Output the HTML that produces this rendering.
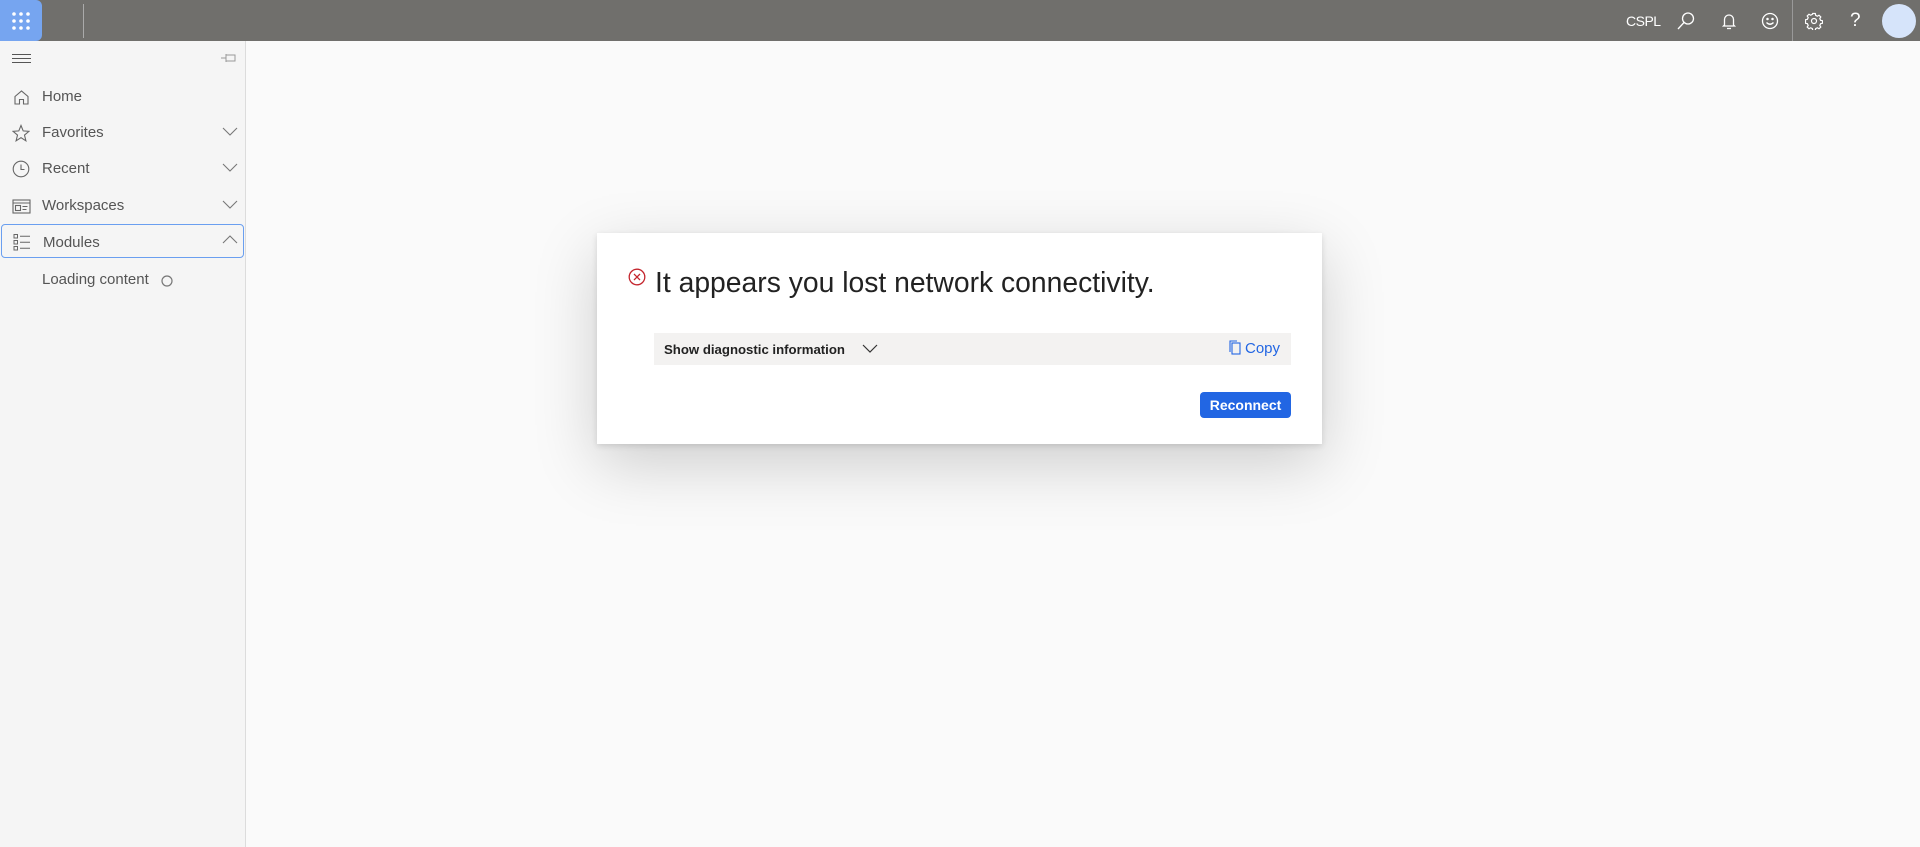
<!DOCTYPE html>
<html><head><meta charset="utf-8"><style>
*{box-sizing:border-box;margin:0;padding:0}
body{width:1920px;height:847px;overflow:hidden;background:#fafafa;font-family:"Liberation Sans",sans-serif;position:relative}
.hdr{position:absolute;left:0;top:0;width:1920px;height:41px;background:#706f6c}
.app{position:absolute;left:0;top:0;width:42px;height:41px;background:#76a5f0;border-radius:0 6px 6px 0}
.side{position:absolute;left:0;top:41px;width:246px;height:806px;background:#f5f5f5;border-right:1px solid #dcdcdc}
.item{position:absolute;left:0;width:244px;height:34px;font-size:15px;color:#555;line-height:36px}
.item span{position:absolute;left:42px}
.item svg{position:absolute}
.chev{right:6px;top:10px}
.dlg{position:absolute;left:597px;top:233px;width:725px;height:211px;background:#fff;box-shadow:0 20px 60px rgba(0,0,0,.18),0 2px 6px rgba(0,0,0,.12)}
</style></head><body>
<div class="hdr">
 <div class="app"><svg width="42" height="41"><g fill="#fff"><circle cx="14" cy="14" r="1.8"/><circle cx="21" cy="14" r="1.8"/><circle cx="28" cy="14" r="1.8"/><circle cx="14" cy="21" r="1.8"/><circle cx="21" cy="21" r="1.8"/><circle cx="28" cy="21" r="1.8"/><circle cx="14" cy="28" r="1.8"/><circle cx="21" cy="28" r="1.8"/><circle cx="28" cy="28" r="1.8"/></g></svg></div>
 <div style="position:absolute;left:83px;top:4px;width:1px;height:34px;background:#aaa"></div>
 <div style="position:absolute;left:1626px;top:13px;color:#fff;font-size:14px;letter-spacing:-0.5px">CSPL</div>
 <svg style="position:absolute;left:1676px;top:11px" width="20" height="20" fill="none" stroke="#fff" stroke-width="1.3"><circle cx="12" cy="7.5" r="5.5"/><path d="M8 11.5 2 18"/></svg>
 <svg style="position:absolute;left:1719px;top:11px" width="20" height="20" fill="none" stroke="#fff" stroke-width="1.3"><path d="M5.5 14V8.5a4.5 4.5 0 0 1 9 0V14l1 1h-11z"/><path d="M8 17.5h4"/></svg>
 <svg style="position:absolute;left:1760px;top:11px" width="20" height="20" fill="none" stroke="#fff" stroke-width="1.3"><circle cx="10" cy="10" r="7.5"/><circle cx="7.5" cy="8" r=".6" fill="#fff"/><circle cx="12.5" cy="8" r=".6" fill="#fff"/><path d="M6.5 11.5q3.5 3.5 7 0"/></svg>
 <div style="position:absolute;left:1792px;top:0;width:1px;height:41px;background:#999"></div>
 <svg style="position:absolute;left:1805px;top:12px" width="18" height="18" fill="none" stroke="#fff" stroke-width="1.2"><circle cx="9" cy="9" r="2.5"/><path d="M7.7 1.5h2.6l.4 1.9 1.7.8 1.6-1 1.8 1.8-1 1.6.8 1.7 1.9.4v2.6l-1.9.4-.8 1.7 1 1.6-1.8 1.8-1.6-1-1.7.8-.4 1.9H7.7l-.4-1.9-1.7-.8-1.6 1-1.8-1.8 1-1.6-.8-1.7-1.9-.4V7.7l1.9-.4.8-1.7-1-1.6 1.8-1.8 1.6 1 1.7-.8z"/></svg>
 <div style="position:absolute;left:1850px;top:10px;color:#fff;font-size:19px">?</div>
 <div style="position:absolute;left:1882px;top:4px;width:34px;height:34px;border-radius:50%;background:#d6e4fa"></div>
</div>
<div class="side">
 <svg style="position:absolute;left:12px;top:12px" width="20" height="12" stroke="#555" stroke-width="1"><path d="M0 1.5h19M0 5.5h19M0 9.5h19"/></svg>
 <svg style="position:absolute;left:221px;top:12px" width="16" height="10" fill="none" stroke="#999" stroke-width="1"><path d="M0 5h5M5 1v8M5 2h9v6H5"/></svg>
 <div class="item" style="top:38px"><svg style="left:13px;top:10px" width="17" height="17" fill="none" stroke="#666" stroke-width="1.1"><path d="M2 7.5 8.5 2l6.5 5.5v7.5h-4.5v-4.5h-4v4.5H2z"/></svg><span>Home</span></div>
 <div class="item" style="top:74px"><svg style="left:12px;top:9px" width="18" height="18" fill="none" stroke="#666" stroke-width="1.1"><path d="M9 1.5l2.2 5.4 5.8.4-4.5 3.8 1.4 5.7L9 13.7l-4.9 3.1 1.4-5.7L1 7.3l5.8-.4z"/></svg><span>Favorites</span><svg class="chev" width="16" height="14" fill="none" stroke="#777" stroke-width="1.1"><path d="M1 3l7 7 7-7"/></svg></div>
 <div class="item" style="top:110px"><svg style="left:12px;top:9px" width="18" height="18" fill="none" stroke="#666" stroke-width="1.1"><circle cx="9" cy="9" r="7.8"/><path d="M9 4.5v5h3.5"/></svg><span>Recent</span><svg class="chev" width="16" height="14" fill="none" stroke="#777" stroke-width="1.1"><path d="M1 3l7 7 7-7"/></svg></div>
 <div class="item" style="top:147px"><svg style="left:12px;top:11px" width="19" height="15" fill="none" stroke="#666" stroke-width="1.1"><rect x="1" y="1" width="17" height="13"/><path d="M1 4h17"/><rect x="3.5" y="6.5" width="5" height="5"/><path d="M10.5 7.5h5M10.5 10.5h4"/></svg><span>Workspaces</span><svg class="chev" width="16" height="14" fill="none" stroke="#777" stroke-width="1.1"><path d="M1 3l7 7 7-7"/></svg></div>
 <div class="item" style="top:183px;border:1px solid #6a9ff0;border-radius:4px;left:1px;width:243px"><svg style="left:11px;top:8px" width="18" height="18" fill="none" stroke="#666" stroke-width="1"><rect x="1" y="1.5" width="3.5" height="3.5"/><rect x="1" y="7.5" width="3.5" height="3.5"/><rect x="1" y="13.5" width="3.5" height="3.5"/><path d="M7 3.2h10M7 9.2h10M7 15.2h10"/></svg><span style="left:41px">Modules</span><svg class="chev" width="16" height="14" fill="none" stroke="#777" stroke-width="1.1" style="right:5px;top:8px"><path d="M1 10l7-7 7 7"/></svg></div>
 <div class="item" style="top:221px"><span style="left:42px">Loading content</span><svg style="left:160px;top:12px" width="14" height="14" fill="none" stroke="#777" stroke-width="1.2"><circle cx="7" cy="7" r="5"/></svg></div>
</div>
<div class="dlg">
 <svg style="position:absolute;left:31px;top:35px" width="18" height="18" fill="none" stroke="#c4262e" stroke-width="1.3"><circle cx="9" cy="9" r="7.8"/><path d="M6 6l6 6M12 6l-6 6"/></svg>
 <div style="position:absolute;left:58px;top:33px;font-size:28.3px;color:#222">It appears you lost network connectivity.</div>
 <div style="position:absolute;left:57px;top:100px;width:637px;height:32px;background:#f3f2f1">
  <div style="position:absolute;left:10px;top:9px;font-size:13.2px;font-weight:bold;color:#222">Show diagnostic information</div>
  <svg style="position:absolute;left:208px;top:11px" width="16" height="10" fill="none" stroke="#333" stroke-width="1.2"><path d="M1 1l7 7 7-7"/></svg>
  <svg style="position:absolute;left:575px;top:7px" width="12" height="15" fill="none" stroke="#2266e3" stroke-width="1.1"><rect x="3" y="3" width="8" height="11"/><path d="M1 12V1h7"/></svg>
  <div style="position:absolute;left:591px;top:7px;font-size:15px;color:#2266e3">Copy</div>
 </div>
 <div style="position:absolute;left:603px;top:159px;width:91px;height:26px;background:#2266e3;border-radius:4px;color:#fff;font-size:14px;font-weight:bold;text-align:center;line-height:26px">Reconnect</div>
</div>
</body></html>
